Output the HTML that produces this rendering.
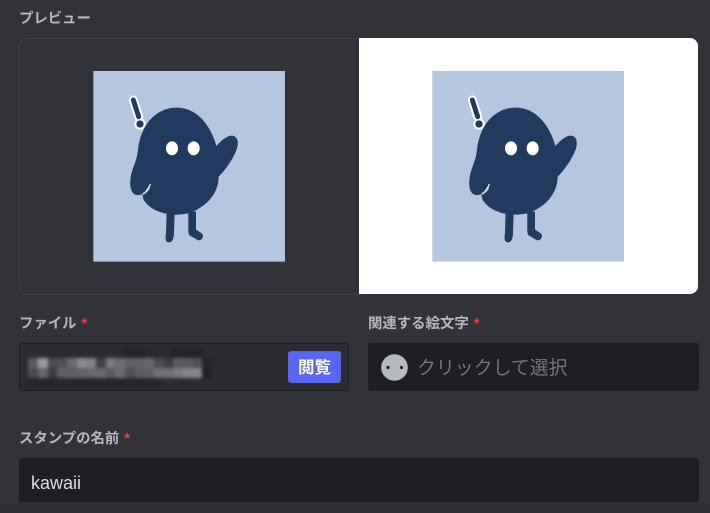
<!DOCTYPE html>
<html>
<head>
<meta charset="utf-8">
<style>
html,body{margin:0;padding:0;width:710px;height:513px;overflow:hidden;background:#323338;font-family:"Liberation Sans","Noto Sans CJK JP",sans-serif}
.a{position:absolute}
.lab{position:absolute;font-size:14.4px;line-height:16px;font-weight:700;color:#b5b8bd;white-space:nowrap}
.lab span{color:#f23f42;margin-left:5px}
</style>
</head>
<body>
<div class="lab" style="left:19px;top:11px">プレビュー</div>

<div class="a" style="left:19px;top:38px;width:339px;height:255px;border:1px solid #3f4147;border-right:none;border-radius:8px 0 0 8px;background:#313338"></div>
<div class="a" style="left:359px;top:38px;width:338.5px;height:256px;background:#fff;border-radius:0 8px 8px 0"></div>

<svg class="a" style="left:0;top:0" width="710" height="513" viewBox="0 0 710 513">
<defs>
<g id="st">
<rect x="10" y="3" width="575" height="572" fill="#b4c6e0"/>
<path d="M130 90L146 140" stroke="#fff" stroke-width="27" stroke-linecap="round" fill="none"/>
<circle cx="150" cy="162" r="17" fill="#fff"/>
<path d="M130 90L146 140" stroke="#213a5f" stroke-width="15" stroke-linecap="round" fill="none"/>
<circle cx="150" cy="162" r="11" fill="#213a5f"/>
<path fill="#213a5f" d="M260 113C320 113 362 165 379 228C392 214 410 196 426 197C444 199 447 218 440 238C430 266 408 298 386 320C386 350 372 395 312 424C270 442 190 438 160 388L157 372C130 384 116 362 122 322C127 292 140 275 144 240C150 170 195 113 260 113Z"/>
<path d="M158 372C168 368 174 360 178 352" stroke="#b4c6e0" stroke-width="6" fill="none"/>
<path d="M168 364C173 358 178 351 181 342" stroke="#fff" stroke-width="3.5" fill="none"/>
<path fill="#213a5f" d="M230 425H254L252 490C251 505 248 517 237 517C226 517 225 505 228 490Z"/>
<path fill="#213a5f" d="M295 425H318L318 478L336 491C344 499 334 515 323 510L302 498C296 495 295 489 295 480Z"/>
<ellipse cx="246" cy="235" rx="18" ry="21" fill="#fff"/>
<ellipse cx="311" cy="235" rx="18" ry="21" fill="#fff"/>
</g>
<filter id="b" x="-5%" y="-15%" width="110%" height="130%" color-interpolation-filters="sRGB"><feGaussianBlur stdDeviation="1.6"/></filter>
</defs>
<use href="#st" transform="translate(90 70) scale(0.3333)"/>
<use href="#st" transform="translate(429 70) scale(0.3333)"/>
</svg>

<div class="lab" style="left:19px;top:316px">ファイル<span>*</span></div>
<div class="a" style="left:19px;top:343px;width:328px;height:46px;background:#2a2c30;border:1px solid #1e1f22;border-radius:3px"></div>

<svg class="a" style="left:0;top:0" width="350" height="392" viewBox="0 0 350 392">
<g filter="url(#b)">
<rect x="37" y="348" width="165" height="11" fill="#2a2b2f"/>
<rect x="28" y="377" width="135" height="10" fill="#27282c"/>
<rect x="125" y="348" width="20" height="11" fill="#232528"/><rect x="172" y="348" width="30" height="11" fill="#232528"/>
<rect x="28" y="358" width="11" height="11" fill="#5a5b5f"/><rect x="38" y="358" width="11" height="11" fill="#9a9b9c"/>
<rect x="48" y="358" width="10" height="11" fill="#4a4b4f"/><rect x="57" y="358" width="11" height="11" fill="#505155"/>
<rect x="67" y="358" width="11" height="11" fill="#6a6b6e"/><rect x="77" y="358" width="10" height="11" fill="#8a8b8d"/>
<rect x="86" y="358" width="11" height="11" fill="#808184"/><rect x="96" y="358" width="11" height="11" fill="#3f4044"/>
<rect x="106" y="358" width="10" height="11" fill="#77787b"/><rect x="115" y="358" width="11" height="11" fill="#6a6b6e"/>
<rect x="125" y="358" width="11" height="11" fill="#606165"/><rect x="135" y="358" width="10" height="11" fill="#626367"/>
<rect x="144" y="358" width="11" height="11" fill="#66676a"/><rect x="154" y="358" width="11" height="11" fill="#4c4d50"/>
<rect x="164" y="358" width="10" height="11" fill="#3c3d40"/><rect x="173" y="358" width="11" height="11" fill="#5c5d61"/>
<rect x="183" y="358" width="11" height="11" fill="#5a5b5f"/><rect x="193" y="358" width="10" height="11" fill="#505155"/>
<rect x="202" y="358" width="10" height="11" fill="#26272a"/>
<rect x="28" y="368" width="11" height="10" fill="#4a4b4f"/><rect x="38" y="368" width="11" height="10" fill="#666769"/>
<rect x="48" y="368" width="10" height="10" fill="#3c3d40"/><rect x="57" y="368" width="11" height="10" fill="#5f6064"/>
<rect x="67" y="368" width="11" height="10" fill="#5f6064"/><rect x="77" y="368" width="10" height="10" fill="#626367"/>
<rect x="86" y="368" width="11" height="10" fill="#66676a"/><rect x="96" y="368" width="11" height="10" fill="#6a6b6e"/>
<rect x="106" y="368" width="10" height="10" fill="#5a5b5f"/><rect x="115" y="368" width="11" height="10" fill="#6d6e71"/>
<rect x="125" y="368" width="11" height="10" fill="#505155"/><rect x="135" y="368" width="10" height="10" fill="#5c5d61"/>
<rect x="144" y="368" width="11" height="10" fill="#5f6064"/><rect x="154" y="368" width="11" height="10" fill="#707174"/>
<rect x="164" y="368" width="10" height="10" fill="#707174"/><rect x="173" y="368" width="11" height="10" fill="#78797b"/>
<rect x="183" y="368" width="11" height="10" fill="#858688"/><rect x="193" y="368" width="10" height="10" fill="#858688"/>
<rect x="202" y="368" width="10" height="10" fill="#222326"/>
</g>
</svg>

<div class="a" style="left:288px;top:351px;width:53px;height:32px;background:#5865f2;border-radius:3px;color:#fff;font-size:16.5px;font-weight:700;line-height:34px;text-align:center">閲覧</div>

<div class="lab" style="left:368px;top:316px">関連する絵文字<span>*</span></div>
<div class="a" style="left:368px;top:343px;width:331px;height:48px;background:#1e1f22;border-radius:3px"></div>
<svg class="a" style="left:381px;top:354px" width="27" height="27" viewBox="0 0 27 27">
<circle cx="13.5" cy="13.5" r="13.3" fill="#b5bac1"/>
<circle cx="7" cy="13.5" r="1.6" fill="#1e1f22"/><circle cx="20.5" cy="13.5" r="1.6" fill="#1e1f22"/>
</svg>
<div class="a" style="left:417px;top:357px;font-size:18.9px;line-height:24px;color:#737579;white-space:nowrap">クリックして選択</div>

<div class="lab" style="left:19px;top:431px">スタンプの名前<span>*</span></div>
<div class="a" style="left:19px;top:458px;width:680px;height:44px;background:#1e1f22;border-radius:3px 3px 0 0"></div>
<div class="a" style="left:31px;top:473px;font-size:18px;line-height:20px;color:#dbdee1;white-space:nowrap">kawaii</div>
<div class="a" style="left:0;top:502px;width:710px;height:11px;background:#2f3135"></div>
</body>
</html>
